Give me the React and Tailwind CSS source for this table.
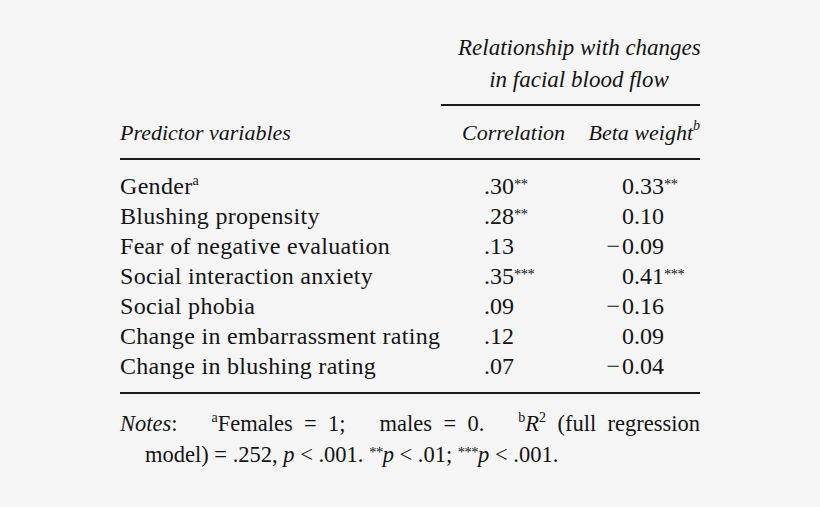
import React from "react";

const rows = [
  { name: "Gender", nameSup: "a", corr: ".30", corrSup: "**", beta: "0.33", betaSup: "**" },
  { name: "Blushing propensity", corr: ".28", corrSup: "**", beta: "0.10" },
  { name: "Fear of negative evaluation", corr: ".13", beta: "0.09", neg: true },
  { name: "Social interaction anxiety", corr: ".35", corrSup: "***", beta: "0.41", betaSup: "***" },
  { name: "Social phobia", corr: ".09", beta: "0.16", neg: true },
  { name: "Change in embarrassment rating", corr: ".12", beta: "0.09" },
  { name: "Change in blushing rating", corr: ".07", beta: "0.04", neg: true },
];

function Sup({ children }) {
  return <sup className="text-[14px] top-[-9px]">{children}</sup>;
}

function Stars({ children }) {
  return <sup className="text-[14.5px] top-[-5px] tracking-[-0.5px]">{children}</sup>;
}

export default function App() {
  return (
    <div
      className="w-[820px] h-[507px] bg-[#f5f5f5] text-[#141414] overflow-hidden"
      style={{ fontFamily: '"Liberation Serif", "Times New Roman", serif' }}
    >
      <div className="ml-[120px] w-[580px] pt-[32px]">
        {/* Spanner header */}
        <div className="flex">
          <div className="w-[321px]" />
          <div className="w-[259px] pl-[17px] text-center italic text-[23px] leading-[32px] whitespace-nowrap">
            <div>Relationship with changes</div>
            <div>in facial blood flow</div>
          </div>
        </div>
        <div className="flex mt-[8px]">
          <div className="w-[321px]" />
          <div className="w-[259px] h-[2px] bg-[#1a1a1a]" />
        </div>
        {/* Column headers */}
        <div className="grid grid-cols-[321px_130px_129px] italic text-[22px] leading-[30px] mt-[12px]">
          <div>Predictor variables</div>
          <div className="pl-[21px]">Correlation</div>
          <div className="text-right whitespace-nowrap">
            Beta weight<sup className="text-[14px] top-[-10px]">b</sup>
          </div>
        </div>
        <div className="h-[2px] bg-[#1a1a1a] mt-[10px]" />
        {/* Body rows */}
        <div className="mt-[11px] text-[24px] leading-[30px]">
          {rows.map((r) => (
            <div key={r.name} className="grid grid-cols-[321px_130px_129px]">
              <div className="tracking-[0.3px] whitespace-nowrap">
                {r.name}
                {r.nameSup && <Sup>{r.nameSup}</Sup>}
              </div>
              <div className="pl-[43px] whitespace-nowrap">
                {r.corr}
                {r.corrSup && <Stars>{r.corrSup}</Stars>}
              </div>
              <div className="whitespace-nowrap">
                <span className="inline-block w-[93px] text-right">
                  {r.neg && <span className="mr-[2px]">{"\u2212"}</span>}
                  {r.beta}
                </span>
                {r.betaSup && <Stars>{r.betaSup}</Stars>}
              </div>
            </div>
          ))}
        </div>
        <div className="h-[2px] bg-[#1a1a1a] mt-[11px]" />
        {/* Notes */}
        <div className="mt-[14px] text-[22.5px] leading-[31px] text-justify pl-[25px] [text-indent:-25px]">
          <span className="italic">Notes</span>:{"\u2003 "}
          <Sup>a</Sup>Females = 1;{"\u2003 "}males = 0.{"\u2003 "}
          <Sup>b</Sup>
          <span className="italic">R</span>
          <Sup>2</Sup> (full regression model)&nbsp;=&nbsp;.252,{" "}
          <span className="italic">p</span>&nbsp;&lt;&nbsp;.001.{" "}
          <Stars>**</Stars>
          <span className="italic">p</span>&nbsp;&lt;&nbsp;.01;{" "}
          <Stars>***</Stars>
          <span className="italic">p</span>&nbsp;&lt;&nbsp;.001.
        </div>
      </div>
    </div>
  );
}
